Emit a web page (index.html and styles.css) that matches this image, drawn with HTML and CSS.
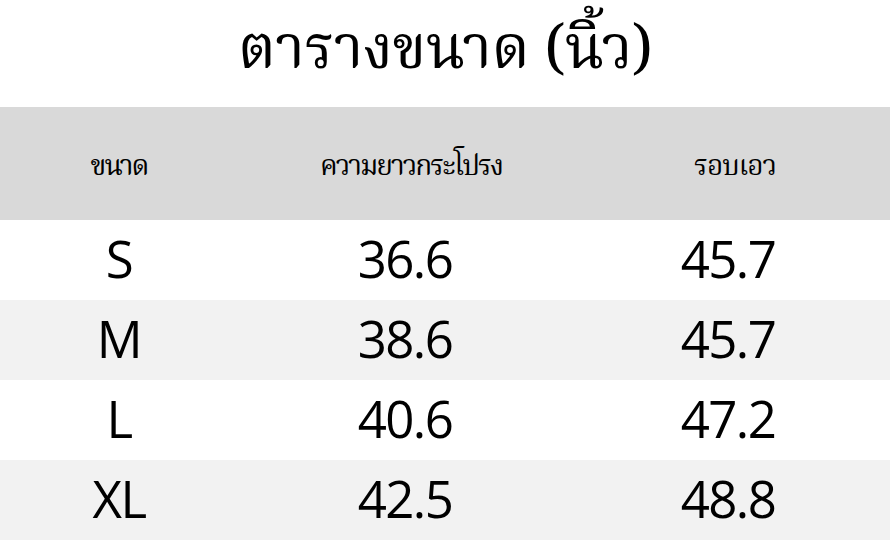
FILE: index.html
```html
<!DOCTYPE html>
<html lang="th">
<head>
<meta charset="utf-8">
<link rel="stylesheet" href="styles.css">
</head>
<body>
<div class="page">
  <h1 class="title">ตารางขนาด (นิ้ว)</h1>
  <div class="table">
    <div class="row head">
      <div class="cell c1">ขนาด</div>
      <div class="cell c2">ความยาวกระโปรง</div>
      <div class="cell c3">รอบเอว</div>
    </div>
    <div class="row">
      <div class="cell c1">S</div>
      <div class="cell c2">36.6</div>
      <div class="cell c3">45.7</div>
    </div>
    <div class="row alt">
      <div class="cell c1">M</div>
      <div class="cell c2">38.6</div>
      <div class="cell c3">45.7</div>
    </div>
    <div class="row">
      <div class="cell c1">L</div>
      <div class="cell c2">40.6</div>
      <div class="cell c3">47.2</div>
    </div>
    <div class="row alt">
      <div class="cell c1">XL</div>
      <div class="cell c2">42.5</div>
      <div class="cell c3">48.8</div>
    </div>
  </div>
</div>
</body>
</html>
```
FILE: styles.css
```css
html, body {
  margin: 0;
  padding: 0;
  background: #ffffff;
}
.page {
  width: 890px;
  height: 542px;
  display: flex;
  flex-direction: column;
  color: #000;
}
.title {
  margin: 0;
  height: 107px;
  box-sizing: border-box;
  padding-bottom: 4px;
  display: flex;
  align-items: center;
  justify-content: center;
  font-family: "Noto Serif Thai", "Norasi", "Liberation Serif", serif;
  font-weight: normal;
  font-size: 60px;
  letter-spacing: -0.5px;
}
.table {
  display: flex;
  flex-direction: column;
}
.row {
  display: grid;
  grid-template-columns: 238px 334px 312px 1fr;
  height: 80px;
  box-sizing: border-box;
  padding-bottom: 4px;
  align-items: center;
  font-family: "Open Sans", sans-serif;
  font-size: 51px;
  letter-spacing: -1.6px;
}
.row.head {
  height: 113px;
  padding-bottom: 0;
  padding-top: 8px;
  background: #d9d9d9;
  font-family: "Noto Serif Thai", "Norasi", "Liberation Serif", serif;
  font-size: 28px;
  letter-spacing: -2px;
}
.row.head .c2 {
  padding-left: 12px;
}
.row.head .c3 {
  padding-left: 14px;
  letter-spacing: -1px;
}
.row.alt {
  background: #f2f2f2;
}
.cell {
  text-align: center;
}
```
